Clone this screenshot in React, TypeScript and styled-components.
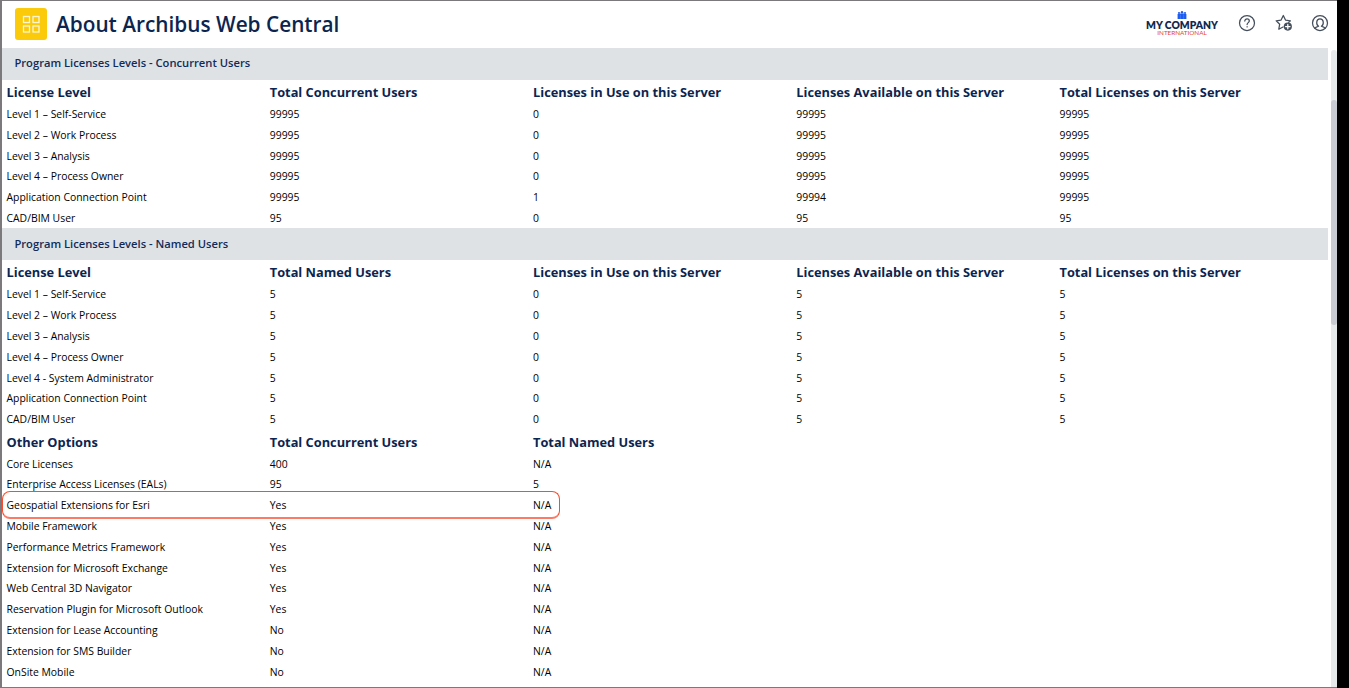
import React from "react";
import styled, { createGlobalStyle } from "styled-components";

const GlobalStyle = createGlobalStyle`
  * { box-sizing: border-box; }
  body { margin: 0; background: #000; font-family: "Open Sans", sans-serif; overflow: hidden; }
`;

const Frame = styled.div`
  width: 1337px;
  height: 688px;
  display: flex;
  flex-direction: column;
  background: #fff;
  border: solid #7b797b;
  border-width: 1px 0 1px 2px;
  overflow: hidden;
`;

const Header = styled.header`
  height: 47px;
  flex: none;
  display: flex;
  align-items: center;
  padding: 0 8px 2px 13px;
`;

const AppTile = styled.div`
  width: 32px;
  height: 32px;
  border-radius: 3px;
  background: #fbca0a;
  display: flex;
`;

const Title = styled.h1`
  margin: 0 auto 0 9px;
  font-size: 20.8px;
  line-height: 32px;
  font-weight: 600;
  color: #0b254f;
  white-space: nowrap;
`;

const Brand = styled.div`
  width: 74px;
  display: flex;
  flex-direction: column;
  align-items: center;
  margin-right: 19px;
  font-family: Lato, sans-serif;
  white-space: nowrap;
`;

const BrandName = styled.div`
  font-size: 10.3px;
  font-weight: 800;
  line-height: 10px;
  padding-top: 1px;
  color: #11284f;
`;

const BrandSub = styled.div`
  font-size: 6.3px;
  line-height: 6px;
  padding-bottom: 1px;
  color: #e2432f;
`;

const Actions = styled.div`
  display: flex;
  gap: 18.5px;
  padding-bottom: 1px;
`;

const ActionIcon = styled.svg`
  width: 18px;
  height: 18px;
  fill: none;
  stroke: #454e5b;
  stroke-width: 1.25;
  stroke-linejoin: round;
  stroke-linecap: round;
`;

const Body = styled.div`
  flex: 1;
  min-height: 0;
  display: flex;
  justify-content: space-between;
`;

const Content = styled.main`
  width: 1326px;
  overflow: hidden;
`;

const SectionBar = styled.h2`
  margin: 0;
  height: 32px;
  padding: 0.15px 0 0 12.4px;
  background: #dee2e5;
  color: #132b58;
  font-size: 11.2px;
  font-weight: 600;
  line-height: 30.4px;
`;

const Row = styled.div<{ $head?: boolean }>`
  display: grid;
  grid-template-columns: repeat(5, 263.25px);
  height: ${(p) => (p.$head ? 23.6 : 20.8)}px;
  line-height: ${(p) => (p.$head ? 24.2 : 21.8)}px;
  padding: ${(p) => (p.$head ? 0 : 0.4)}px 0 0 4.5px;
  font-size: ${(p) => (p.$head ? 12.8 : 10.4)}px;
  font-weight: ${(p) => (p.$head ? 700 : 400)};
  color: ${(p) => (p.$head ? "#0b254f" : "#000")};
  white-space: nowrap;
  position: relative;
`;

const Highlight = styled.div`
  position: absolute;
  left: 0;
  top: -4px;
  width: 558px;
  height: 28px;
  border: 1px solid #fb4d2e;
  border-bottom: 2px solid #fc7b66;
  border-radius: 8px;
`;

const ScrollTrack = styled.div`
  width: 6px;
  margin-top: 2px;
  padding-top: 50px;
  border-radius: 3px 3px 0 0;
  background: #e6eaeb;
`;

const ScrollThumb = styled.div`
  height: 225px;
  border-radius: 3px;
  background: #c8ccd2;
`;

const concurrent = [
  ["Level 1 – Self-Service", "99995", "0", "99995", "99995"],
  ["Level 2 – Work Process", "99995", "0", "99995", "99995"],
  ["Level 3 – Analysis", "99995", "0", "99995", "99995"],
  ["Level 4 – Process Owner", "99995", "0", "99995", "99995"],
  ["Application Connection Point", "99995", "1", "99994", "99995"],
  ["CAD/BIM User", "95", "0", "95", "95"],
];

const named = [
  "Level 1 – Self-Service",
  "Level 2 – Work Process",
  "Level 3 – Analysis",
  "Level 4 – Process Owner",
  "Level 4 - System Administrator",
  "Application Connection Point",
  "CAD/BIM User",
].map((name) => [name, "5", "0", "5", "5"]);

const options = [
  ["Core Licenses", "400", "N/A"],
  ["Enterprise Access Licenses (EALs)", "95", "5"],
  ["Geospatial Extensions for Esri", "Yes", "N/A"],
  ["Mobile Framework", "Yes", "N/A"],
  ["Performance Metrics Framework", "Yes", "N/A"],
  ["Extension for Microsoft Exchange", "Yes", "N/A"],
  ["Web Central 3D Navigator", "Yes", "N/A"],
  ["Reservation Plugin for Microsoft Outlook", "Yes", "N/A"],
  ["Extension for Lease Accounting", "No", "N/A"],
  ["Extension for SMS Builder", "No", "N/A"],
  ["OnSite Mobile", "No", "N/A"],
];

const serverColumns = [
  "Licenses in Use on this Server",
  "Licenses Available on this Server",
  "Total Licenses on this Server",
];

function Table({ head, rows, marked }: { head: string[]; rows: string[][]; marked?: number }) {
  return (
    <>
      <Row $head>
        {head.map((h) => (
          <span key={h}>{h}</span>
        ))}
      </Row>
      {rows.map((cells, r) => (
        <Row key={cells[0]}>
          {cells.map((c, i) => (
            <span key={i}>{c}</span>
          ))}
          {marked === r && <Highlight />}
        </Row>
      ))}
    </>
  );
}

export default function App() {
  return (
    <Frame>
      <GlobalStyle />
      <Header>
        <AppTile>
          <svg width="32" height="32" fill="none" stroke="#fff6cf" strokeWidth="1.3">
            <rect x="8.5" y="8.5" width="6" height="6" />
            <rect x="18" y="8.5" width="6" height="6" />
            <rect x="8.5" y="18" width="6" height="6" />
            <rect x="18" y="18" width="6" height="6" />
          </svg>
        </AppTile>
        <Title>About Archibus Web Central</Title>
        <Brand>
          <svg width="10" height="8" viewBox="0 0 10 8" fill="#1d5cf0">
            <circle cx="5" cy="1.2" r="1.2" />
            <circle cx="2" cy="2" r="1.1" />
            <circle cx="8" cy="2" r="1.1" />
            <path d="M.6 3.1h2.5v-.6h3.8v.6h2.5V8H.6z" />
            <path d="M3.4 3.5V8M6.6 3.5V8" stroke="#7fa3fa" strokeWidth=".35" />
          </svg>
          <BrandName>MY COMPANY</BrandName>
          <BrandSub>INTERNATIONAL</BrandSub>
        </Brand>
        <Actions>
          <ActionIcon viewBox="0 0 18 18">
            <circle cx="9" cy="9" r="7.5" />
            <path d="M6.8 7.1C6.8 4.2 11.3 4.4 11.3 7c0 1.6-2.2 1.7-2.2 3.5M9.1 12.7v.2" />
          </ActionIcon>
          <ActionIcon viewBox="0 0 18 18">
            <path d="M8 13l-4.2 2.2.9-5L1.2 6.8l4.9-.7L8.3 1.5l2.2 4.6 4.9.7-1.7 1.6" />
            <circle cx="12.8" cy="12.6" r="4.1" fill="#454e5b" stroke="none" />
            <path d="M12.8 10.4v4.4M10.6 12.6H15" stroke="#fff" />
          </ActionIcon>
          <ActionIcon viewBox="0 0 18 18">
            <circle cx="9" cy="9" r="7.5" />
            <path d="M4 14.1c.6-1.2 1.7-1.4 3.6-1.9C4.9 10.8 4.9 4.8 9 4.8s4.1 6 1.4 7.4c1.9.5 3 .7 3.6 1.9" />
          </ActionIcon>
        </Actions>
      </Header>
      <Body>
        <Content>
          <SectionBar>Program Licenses Levels - Concurrent Users</SectionBar>
          <Table head={["License Level", "Total Concurrent Users", ...serverColumns]} rows={concurrent} />
          <SectionBar>Program Licenses Levels - Named Users</SectionBar>
          <Table head={["License Level", "Total Named Users", ...serverColumns]} rows={named} />
          <Table head={["Other Options", "Total Concurrent Users", "Total Named Users"]} rows={options} marked={2} />
        </Content>
        <ScrollTrack>
          <ScrollThumb />
        </ScrollTrack>
      </Body>
    </Frame>
  );
}
